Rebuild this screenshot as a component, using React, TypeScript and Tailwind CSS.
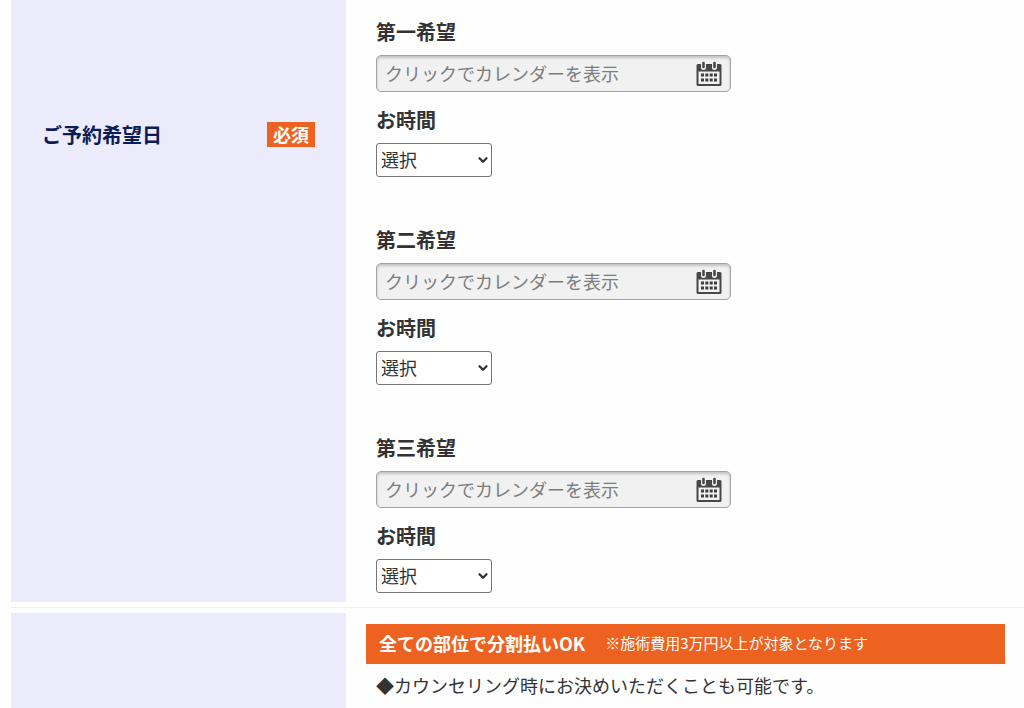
import { ChevronDown } from "lucide-react"

const choices = [
  { id: "first", title: "第一希望" },
  { id: "second", title: "第二希望" },
  { id: "third", title: "第三希望" },
]

const CalendarIcon = () => (
  <svg viewBox="0 0 26 26" className="w-[26px] h-[26px]" aria-hidden="true">
    <path
      fill="#484848"
      fillRule="evenodd"
      d="M2 3h22a1.500 1.500 0 0 1 1.500 1.500v19A1.500 1.500 0 0 1 24 25H2a1.500 1.500 0 0 1-1.500-1.500v-19A1.500 1.500 0 0 1 2 3zM2.500 10.500v12.500h21v-12.500z"
    />
    <path d="M7.500 2v4.500M18.500 2v4.500" stroke="#f1f1f1" strokeWidth="5" strokeLinecap="round" />
    <path d="M7.500 2v4M18.500 2v4" stroke="#484848" strokeWidth="2.600" strokeLinecap="round" />
    <path
      fill="#3f3f3f"
      d="M5 12.500h3v3H5zM9.300 12.500h3v3h-3zM13.700 12.500h3v3h-3zM18 12.500h3v3h-3zM5 17.500h3v3H5zM9.300 17.500h3v3h-3zM13.700 17.500h3v3h-3zM18 17.500h3v3h-3z"
    />
  </svg>
)

const DateChoice = ({ id, title }: { id: string; title: string }) => (
  <div>
    <label htmlFor={`${id}-date`} className="block text-xl leading-[30px] font-bold">
      {title}
    </label>
    <div className="relative mt-2 max-w-[355px]">
      <input
        id={`${id}-date`}
        type="text"
        readOnly
        placeholder="クリックでカレンダーを表示"
        className="block w-full h-[37px] pl-2 pr-10 pb-[2px] text-lg bg-[#f1f1f1] border border-[#a3a3a3] rounded-[5px] shadow-[inset_0_2px_3px_rgba(0,0,0,0.2)] placeholder:text-[#7c7c7c]"
      />
      <span className="absolute right-[9px] top-[6px] pointer-events-none">
        <CalendarIcon />
      </span>
    </div>
    <label htmlFor={`${id}-time`} className="block mt-[13px] text-xl leading-[30px] font-bold">
      お時間
    </label>
    <div className="relative mt-2 w-[116px]">
      <select
        id={`${id}-time`}
        className="block w-full h-[34px] pl-1 pr-6 pb-[2px] text-lg leading-6 appearance-none bg-white border border-[#767676] rounded-[3px]"
      >
        <option>選択</option>
      </select>
      <ChevronDown
        className="absolute right-[2px] top-[10px] w-[14px] h-[14px] pointer-events-none"
        strokeWidth={4}
      />
    </div>
  </div>
)

const App = () => {
  return (
    <form className="min-h-screen pl-[11px] bg-[#fefefe] text-[#333333] font-['Noto_Sans_CJK_JP',sans-serif]">
      {/* Preferred dates */}
      <section className="grid grid-cols-[335px_1fr]">
        <div className="flex items-start justify-between bg-[#ecebfb] pt-[120px] pl-[31px] pr-[31px]">
          <h2 className="text-xl leading-[30px] font-bold text-[#0b1c55]">ご予約希望日</h2>
          <span className="mt-[2px] px-[6px] text-lg leading-[25px] font-bold text-white bg-[#ed6220]">必須</span>
        </div>
        <div className="flex flex-col gap-12 pt-[17px] pb-[9px] pl-[30px] pr-5">
          {choices.map((choice) => (
            <DateChoice key={choice.id} id={choice.id} title={choice.title} />
          ))}
        </div>
      </section>

      <hr className="mt-[5px] mb-[5px] border-[#eeeef3]" />

      {/* Payment */}
      <section className="grid grid-cols-[335px_1fr]">
        <div className="bg-[#ecebfb]" />
        <div className="pt-[11px] pl-5 pr-[19px]">
          <div className="flex items-center gap-5 h-10 pl-[13px] pb-[2px] text-white bg-[#ed6220]">
            <strong className="text-lg">全ての部位で分割払いOK</strong>
            <span className="text-[15px]">※施術費用3万円以上が対象となります</span>
          </div>
          <p className="pt-[6px] pb-2 pl-[10px] text-lg leading-[30px]">
            ◆カウンセリング時にお決めいただくことも可能です。
          </p>
        </div>
      </section>
    </form>
  )
}

export default App
